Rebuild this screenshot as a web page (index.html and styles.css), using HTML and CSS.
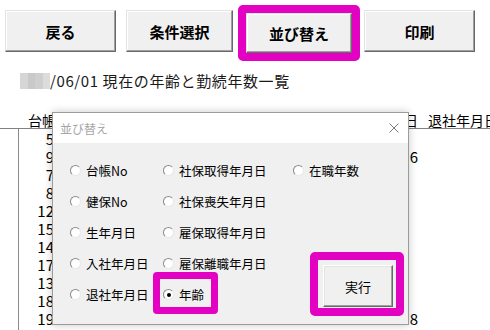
FILE: index.html
```html
<!DOCTYPE html>
<html>
<head>
    <link rel="stylesheet" href="styles.css">
</head>
<body>
    <div class="toolbar">
        <button class="tool first">戻る</button>
        <button class="tool narrow">条件選択</button>
        <div class="mark-tool">
            <button class="tool inner">並び替え</button>
        </div>
        <button class="tool">印刷</button>
    </div>

    <div class="title">
        <span class="blur"><i></i><i></i><i></i><i></i></span><span class="title-text">/06/01 現在の年齢と勤続年数一覧</span>
    </div>

    <div class="sheet">
        <div class="sheet-head">
            <span class="h-no">台帳No</span>
            <span class="h-date">年月日</span>
            <span class="h-out">退社年月日</span>
        </div>
        <div class="sheet-body">
            <div class="col-no">
                <div>5</div><div>9</div><div>7</div><div>8</div><div>12</div><div>15</div>
                <div>14</div><div>17</div><div>13</div><div>18</div><div>19</div>
            </div>
            <div class="col-date">
                <div></div><div>6</div><div></div><div></div><div></div><div></div>
                <div></div><div></div><div></div><div></div><div>8</div>
            </div>
        </div>
    </div>

    <div class="dialog">
        <div class="dialog-title">
            <span>並び替え</span>
            <svg width="10" height="10" viewBox="0 0 10 10">
                <path d="M0.5 0.5 L9.5 9.5 M9.5 0.5 L0.5 9.5" stroke="#7a7a7a" stroke-width="1" fill="none"/>
            </svg>
        </div>
        <div class="dialog-body">
            <label class="opt"><span class="radio"></span>台帳No</label>
            <label class="opt"><span class="radio"></span>社保取得年月日</label>
            <label class="opt"><span class="radio"></span>在職年数</label>

            <label class="opt"><span class="radio"></span>健保No</label>
            <label class="opt"><span class="radio"></span>社保喪失年月日</label>
            <span></span>

            <label class="opt"><span class="radio"></span>生年月日</label>
            <label class="opt"><span class="radio"></span>雇保取得年月日</label>
            <span></span>

            <label class="opt"><span class="radio"></span>入社年月日</label>
            <label class="opt"><span class="radio"></span>雇保離職年月日</label>
            <button class="run">実行</button>

            <label class="opt"><span class="radio"></span>退社年月日</label>
            <label class="opt picked"><span class="radio on"></span>年齢</label>
        </div>
    </div>
</body>
</html>
```

FILE: styles.css
```css
*,
*::before,
*::after {
    margin: 0;
    padding: 0;
    box-sizing: border-box;
}

body {
    position: relative;
    width: 490px;
    height: 330px;
    overflow: hidden;
    background: #fff;
    color: #000;
    font-family: "Noto Sans CJK JP", "Noto Sans", sans-serif;
}

/* top buttons */
.toolbar {
    display: flex;
    align-items: flex-start;
    padding: 10px 0 0 5px;
    height: 52px;
}

.tool {
    flex-shrink: 0;
    width: 111px;
    height: 42px;
    background: #f0f0f0;
    border: 1px solid;
    border-color: #e3e3e3 #696969 #696969 #e3e3e3;
    box-shadow: inset -1px -1px #a0a0a0, inset 1px 1px #fff;
    font-family: inherit;
    font-size: 15px;
    font-weight: bold;
    line-height: 1;
}

.tool.narrow {
    width: 107px;
    margin-left: 10px;
}

.mark-tool {
    flex-shrink: 0;
    margin: -5px 4px 0 5px;
    border: 8px solid #e302c1;
    border-radius: 5px;
    display: flex;
}

.tool.inner {
    width: 106px;
    height: 40px;
}

/* heading line */
.title {
    margin-top: 19px;
    padding-left: 20px;
    height: 20px;
    display: flex;
    align-items: center;
    font-size: 15px;
    line-height: 20px;
    color: #1a1a1a;
    white-space: nowrap;
}

.title-text {
    letter-spacing: 0.6px;
}

.blur {
    flex-shrink: 0;
    display: flex;
    width: 30px;
    height: 16px;
}

.blur i {
    flex: 1;
    background: #d6d6d6;
}

.blur i:nth-child(2) { background: #c9c9c9; }
.blur i:nth-child(3) { background: #cfcfcf; }
.blur i:nth-child(4) { background: #dcdcdc; }

/* sheet behind the dialog */
.sheet {
    margin-top: 21px;
    font-size: 14px;
    white-space: nowrap;
}

.sheet-head {
    display: flex;
    height: 17px;
    line-height: 16px;
    border-bottom: 1px solid #808080;
}

.sheet-head span {
    flex-shrink: 0;
}

.h-no {
    margin-left: 28px;
    width: 340px;
}

.h-date {
    width: 50px;
    text-align: right;
}

.h-out {
    margin-left: 10px;
}

.sheet-body {
    display: flex;
    font-size: 15px;
}

.col-no {
    flex-shrink: 0;
    margin-left: 18px;
    width: 36px;
    padding-top: 1px;
    border-left: 1px solid #8c8c8c;
    text-align: right;
    height: 210px;
}

.col-no div,
.col-date div {
    height: 18px;
    line-height: 18px;
}

.col-date {
    flex-shrink: 0;
    margin-left: 350px;
    width: 14px;
    padding-top: 1px;
    text-align: right;
}

/* sort dialog */
.dialog {
    position: absolute;
    left: 52px;
    top: 112px;
    width: 357px;
    height: 213px;
    border: 1px solid #9c9c9c;
    background: #f0f0f0;
    box-shadow: 0 0 8px rgba(0, 0, 0, 0.22);
}

.dialog-title {
    height: 30px;
    background: #fff;
    display: flex;
    align-items: center;
    justify-content: space-between;
    padding: 0 9px 0 7px;
    font-size: 12px;
    color: #a6a6a6;
}

.dialog-body {
    display: grid;
    grid-template-columns: 93px 130px 1fr;
    grid-auto-rows: 31px;
    padding: 12px 0 0 17px;
    font-size: 12.5px;
}

.opt {
    position: relative;
    display: flex;
    align-items: center;
    gap: 5px;
    white-space: nowrap;
}

.radio {
    position: relative;
    flex-shrink: 0;
    width: 11px;
    height: 11px;
    border-radius: 50%;
    background: #fff;
    border: 1px solid;
    border-color: #8a8a8a #e8e8e8 #e8e8e8 #8a8a8a;
}

.radio.on::after {
    content: "";
    position: absolute;
    left: 2.5px;
    top: 2.5px;
    width: 4px;
    height: 4px;
    border-radius: 50%;
    background: #000;
}

.picked::before {
    content: "";
    position: absolute;
    left: -10px;
    top: -7px;
    width: 65px;
    height: 42px;
    border: 7px solid #e302c1;
    border-radius: 4px;
}

.run {
    position: relative;
    grid-column: 3;
    grid-row: 4 / span 2;
    width: 70px;
    height: 42px;
    margin: 17px 0 0 30px;
    background: #f0f0f0;
    border: 1px solid;
    border-color: #fff #696969 #696969 #fff;
    box-shadow: inset -1px -1px #a0a0a0, inset 1px 1px #e3e3e3;
    font-family: inherit;
    font-size: 13px;
}

.run::before {
    content: "";
    position: absolute;
    left: -14px;
    top: -14px;
    width: 94px;
    height: 64px;
    border: 8px solid #e302c1;
    border-radius: 5px;
}
```
